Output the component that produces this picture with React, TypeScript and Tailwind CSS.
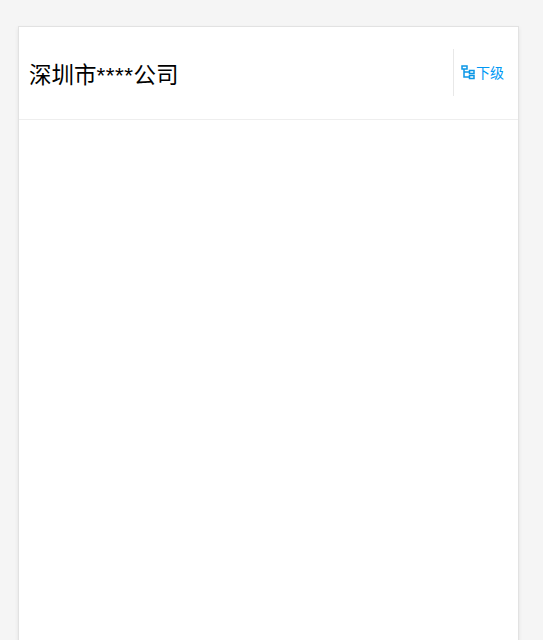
export default function App() {
  return (
    <div className="h-[640px] overflow-hidden bg-[#f5f5f5] pl-[18px] pr-[24px] pt-[26px] font-['Liberation_Sans','Noto_Sans_CJK_SC',sans-serif]">
      <div className="h-[700px] border border-[#e2e2e2] bg-white shadow-[0_2px_4px_rgba(0,0,0,0.08)]">
        <div className="flex h-[93px] items-center justify-between border-b border-[#eeeeee] pl-[10px]">
          <h1 className="pt-[6px] text-[22.5px] font-normal text-black">
            深圳市<span className="tracking-[0.5px]">****</span>公司
          </h1>
          <div className="mb-[2px] flex h-[47px] w-[65px] items-center gap-[1px] border-l border-[#e8e8e8] pl-[7px] pt-[2px]">
            <svg
              width="14"
              height="15"
              viewBox="0 0 14 15"
              fill="none"
              stroke="#0b97e6"
              strokeWidth="1.5"
              className="mb-[2px]"
            >
              <rect x="1" y="1" width="5" height="3" />
              <rect x="8.5" y="5.5" width="4.5" height="3" />
              <rect x="8.5" y="10.5" width="4.5" height="3" />
              <path d="M3 4v8h5.5M3 7h5.5" />
            </svg>
            <span className="text-sm text-[#0098f5]">下级</span>
          </div>
        </div>
      </div>
    </div>
  )
}
